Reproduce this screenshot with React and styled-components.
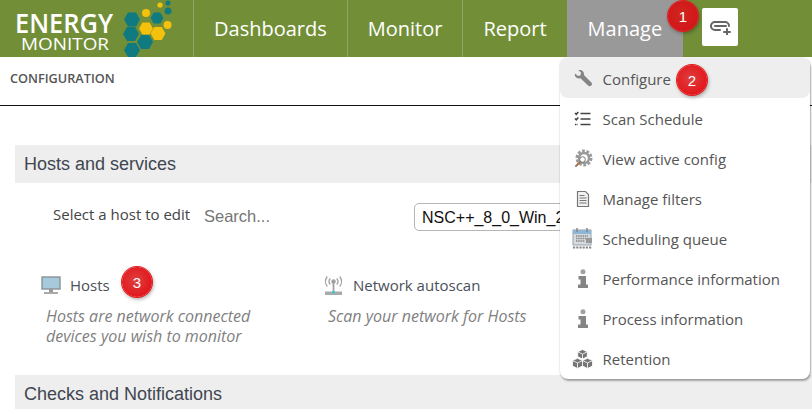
import React from "react";
import styled, { createGlobalStyle } from "styled-components";

const GlobalStyle = createGlobalStyle`
  html, body {
    margin: 0;
    padding: 0;
    background: #fff;
  }
  body {
    font-family: "Open Sans", "Liberation Sans", sans-serif;
    color: #444;
  }
`;

const navItems = [
  { label: "Dashboards" },
  { label: "Monitor" },
  { label: "Report" },
  { label: "Manage", active: true },
];

// flat-top hexagon points around a centre
const hex = (cx, cy, r) =>
  [0, 60, 120, 180, 240, 300]
    .map((a) => {
      const rad = (a * Math.PI) / 180;
      return `${(cx + r * Math.cos(rad)).toFixed(1)},${(cy + r * Math.sin(rad)).toFixed(1)}`;
    })
    .join(" ");

const Logo = () => (
  <LogoSvg viewBox="0 0 193 57" width="193" height="57">
    <text x="15" y="33" fill="#fff" fontFamily="Open Sans" fontWeight="600" fontSize="26.500" textLength="98" lengthAdjust="spacingAndGlyphs">ENERGY</text>
    <text x="21" y="50" fill="#fff" fontFamily="Open Sans" fontSize="16.500" textLength="88" lengthAdjust="spacingAndGlyphs">MONITOR</text>
    <g fill="#0f7a80">
      <polygon points={hex(132, 19.500, 8)} />
      <polygon points={hex(131, 34, 8)} />
      <polygon points={hex(145, 42, 8)} />
      <polygon points={hex(132, 50, 8)} />
      <polygon points={hex(157, 18, 6.500)} />
      <circle cx="168" cy="11" r="3.500" />
      <circle cx="168" cy="3" r="2.500" />
    </g>
    <g fill="#f4c20d">
      <circle cx="146" cy="13" r="4" />
      <circle cx="160" cy="5" r="2.600" />
      <circle cx="167.500" cy="25" r="4" />
      <polygon points={hex(146, 28.500, 7)} />
      <polygon points={hex(158, 33.500, 7.500)} />
    </g>
  </LogoSvg>
);

const LinkPlusIcon = () => (
  <svg width="23" height="15" viewBox="0 0 23 15" fill="none" stroke="#666" strokeWidth="2" strokeLinecap="round">
    <path d="M10 2H6a4 4 0 0 0 0 8h5" />
    <path d="M10 2h6a4 4 0 0 1 4 4" />
    <path d="M6 6h11" />
    <path d="M18 9v5.500M15 12h6" />
  </svg>
);

const WrenchIcon = () => (
  <svg width="20" height="20" viewBox="0 0 20 20" fill="#858585">
    <path d="M2 4.500 5 7l2.500-.8L8 3.500 5.300 1.200C8 .4 10.800 1.600 11 5c0 .8 0 1 .4 1.400l6.800 6.800c1 1 1 2.400.2 3.300-.9 1-2.400 1-3.400 0L8 9.800c-.4-.4-.8-.5-1.500-.4C3.500 9.700 1.200 7.500 2 4.500z" />
  </svg>
);

const ChecklistIcon = () => (
  <svg width="20" height="20" viewBox="0 0 20 20" fill="none" stroke="#444" strokeWidth="1.600">
    <path d="M7.500 4.500h10M7.500 10h10M7.500 15.500h10" />
    <path d="M2 4l1.300 1.300L5.300 3M2 9.500l1.300 1.300 2-2.300" />
    <path d="M2 15.500h3" strokeDasharray="1.500 1" />
  </svg>
);

const GearIcon = () => (
  <svg width="20" height="20" viewBox="0 0 20 20">
    <circle cx="11" cy="9" r="7" fill="none" stroke="#9a9a9a" strokeWidth="3" strokeDasharray="2.800 1.600" />
    <circle cx="11" cy="9" r="5" fill="none" stroke="#999" strokeWidth="2.400" />
    <circle cx="9.500" cy="10.500" r="2.800" fill="#fff" stroke="#777" strokeWidth="1" />
    <path d="M7 13l-4 4" stroke="#a5734f" strokeWidth="2" strokeLinecap="round" />
  </svg>
);

const FileIcon = () => (
  <svg width="20" height="20" viewBox="0 0 20 20" fill="none" stroke="#777" strokeWidth="1.200">
    <path d="M4.500 2.500h8l3 3v12h-11z" fill="#f0f0f0" />
    <path d="M6.500 6.500h5M6.500 9h7M6.500 11.500h7M6.500 14h7" />
  </svg>
);

const CalendarIcon = () => (
  <svg width="21" height="21" viewBox="0 0 21 21">
    <rect x="1" y="2" width="18" height="15" fill="#d6dbe0" stroke="#9aa2a9" />
    <rect x="1" y="2" width="18" height="4" fill="#8db5d6" />
    <path d="M5 0v4M15 0v4" stroke="#888" strokeWidth="1.500" />
    <path d="M4 8h12M4 10.500h12M4 13h9" stroke="#888" strokeWidth="1.400" strokeDasharray="1.500 .7" />
    <rect x="14" y="10" width="6" height="5" fill="#999" />
    <path d="M1 19.500h19" stroke="#888" strokeWidth="2" strokeDasharray="2.200 1" />
  </svg>
);

const InfoIcon = () => (
  <svg width="20" height="20" viewBox="0 0 20 20" fill="#858585">
    <circle cx="10" cy="2.800" r="2.500" fill="#a0a0a0" />
    <path d="M5.500 7h7.500v8.500h2V19h-10v-3.500h2.500V10.500h-2z" />
  </svg>
);

const CubesIcon = () => (
  <svg width="21" height="20" viewBox="0 0 21 20" fill="#757575" stroke="#fff" strokeWidth=".8">
    <path d="M10.500 .5l4.800 2.300v4.900l-4.800 2.300-4.800-2.300V2.800z" />
    <path d="M5.700 2.800l4.800 2.300 4.800-2.300M10.500 5.100v5" fill="none" />
    <path d="M5.500 9.300l5 2.300v5.400l-5 2.500-5-2.500v-5.400z" />
    <path d="M.5 11.600l5 2.300 5-2.300M5.500 13.900v5.600" fill="none" />
    <path d="M15.500 9.300l5 2.300v5.400l-5 2.500-5-2.500v-5.400z" />
    <path d="M10.500 11.600l5 2.300 5-2.300M15.500 13.900v5.600" fill="none" />
  </svg>
);

const MonitorIcon = () => (
  <svg width="20" height="19" viewBox="0 0 20 19">
    <rect x="1" y="1" width="18" height="12" fill="#a6cad9" stroke="#8a9299" strokeWidth="1.400" />
    <rect x="8" y="13" width="4" height="3" fill="#999" />
    <rect x="3" y="16" width="14" height="2" fill="#aaa" />
  </svg>
);

const AntennaIcon = () => (
  <svg width="21" height="21" viewBox="0 0 21 21" fill="none" stroke="#a0a0a0" strokeWidth="1.300">
    <circle cx="10.500" cy="6.500" r="1.600" fill="#999" />
    <path d="M7.300 3.500a4.500 4.500 0 0 0 0 6M13.700 3.500a4.500 4.500 0 0 1 0 6M4.300 1.500a8 8 0 0 0 0 10M16.700 1.500a8 8 0 0 1 0 10" />
    <path d="M10.500 8v9" strokeWidth="1.800" />
    <rect x="2" y="16.500" width="17" height="3.500" fill="#aaa" stroke="none" />
    <rect x="9" y="16" width="3" height="2.500" fill="#4cc" stroke="none" />
  </svg>
);

const menuItems = [
  { label: "Configure", icon: <WrenchIcon />, active: true },
  { label: "Scan Schedule", icon: <ChecklistIcon /> },
  { label: "View active config", icon: <GearIcon /> },
  { label: "Manage filters", icon: <FileIcon /> },
  { label: "Scheduling queue", icon: <CalendarIcon /> },
  { label: "Performance information", icon: <InfoIcon /> },
  { label: "Process information", icon: <InfoIcon /> },
  { label: "Retention", icon: <CubesIcon /> },
];

export default function App() {
  return (
    <Page>
      <GlobalStyle />
      <Header>
        <Logo />
        <Nav>
          {navItems.map((item) => (
            <NavItem key={item.label} $active={item.active}>{item.label}</NavItem>
          ))}
        </Nav>
        <LinkButton>
          <LinkPlusIcon />
        </LinkButton>
        <Badge $x={668} $y={1} $dark>1</Badge>
      </Header>

      <TitleBar>CONFIGURATION</TitleBar>

      <Section>
        <Band>Hosts and services</Band>
        <HostRow>
          <HostLabel>Select a host to edit</HostLabel>
          <SearchInput placeholder="Search..." />
          <HostSelect defaultValue="nsc">
            <option value="nsc">NSC++_8_0_Win_2019</option>
          </HostSelect>
        </HostRow>
        <Cards>
          <Card>
            <CardTitle>
              <MonitorIcon />
              <span>Hosts</span>
            </CardTitle>
            <CardText>Hosts are network connected devices you wish to monitor</CardText>
          </Card>
          <Card>
            <CardTitle>
              <AntennaIcon />
              <span>Network autoscan</span>
            </CardTitle>
            <CardText>Scan your network for Hosts</CardText>
          </Card>
        </Cards>
        <Badge $x={122} $y={267}>3</Badge>
        <Band>Checks and Notifications</Band>
      </Section>

      <Menu>
        {menuItems.map((item) => (
          <MenuRow key={item.label} $active={item.active}>
            <MenuIcon>{item.icon}</MenuIcon>
            {item.label}
          </MenuRow>
        ))}
      </Menu>
      <Badge $x={677} $y={65}>2</Badge>
    </Page>
  );
}

const Page = styled.div`
  position: relative;
  width: 812px;
  height: 409px;
  overflow: hidden;
`;

const Header = styled.header`
  display: flex;
  align-items: stretch;
  height: 57px;
  background: #728f38;
`;

const LogoSvg = styled.svg`
  flex: none;
  display: block;
`;

const Nav = styled.nav`
  display: flex;
`;

const NavItem = styled.div`
  display: flex;
  align-items: center;
  padding: 0 ${(p) => (p.$active ? 21 : 20)}px 0 20px;
  font-size: 20px;
  color: #fff;
  border-left: 1px solid ${(p) => (p.$active ? "transparent" : "#8fa766")};
  background: ${(p) => (p.$active ? "#999999" : "transparent")};
`;

const LinkButton = styled.div`
  display: flex;
  align-items: center;
  justify-content: center;
  width: 36px;
  height: 38px;
  margin: 8px 0 0 19px;
  background: #fff;
  border-radius: 2px;
`;

const Badge = styled.div`
  position: absolute;
  left: ${(p) => p.$x}px;
  top: ${(p) => p.$y}px;
  width: 30px;
  height: 30px;
  display: flex;
  align-items: center;
  justify-content: center;
  border-radius: 50%;
  background: ${(p) =>
    p.$dark
      ? "radial-gradient(circle at 45% 45%, #cc2a1e, #d5141a 70%)"
      : "radial-gradient(circle at 45% 45%, #dd4040, #e3171c 70%)"};
  box-shadow: 0 0 0 1px #e81c1c, 1px 2px 4px rgba(0, 0, 0, 0.4);
  color: #fff;
  font-family: "Liberation Sans", sans-serif;
  font-size: 15px;
`;

const TitleBar = styled.div`
  display: flex;
  align-items: center;
  height: 42px;
  padding: 0 10px 6px;
  font-size: 12.7px;
  font-weight: 600;
  color: #555;
  border-bottom: 1px solid #111;
`;

const Section = styled.section`
  padding: 39px 0 0 15px;
`;

const Band = styled.div`
  display: flex;
  align-items: center;
  height: 38px;
  padding-left: 9px;
  background: #eeeeee;
  font-family: "Liberation Sans", sans-serif;
  font-size: 18px;
  color: #3f4650;
`;

const HostRow = styled.div`
  display: flex;
  align-items: center;
  height: 28px;
  margin-top: 20px;
  padding-left: 38px;
`;

const HostLabel = styled.label`
  width: 151px;
  margin-top: -6px;
  font-size: 15px;
  color: #444;
  white-space: nowrap;
`;

const SearchInput = styled.input`
  width: 210px;
  margin-top: -2px;
  padding: 0;
  border: 0;
  outline: 0;
  font-family: "Liberation Sans", sans-serif;
  font-size: 16.5px;
  &::placeholder {
    color: #757575;
    opacity: 1;
  }
`;

const HostSelect = styled.select`
  width: 300px;
  height: 28px;
  padding-left: 3px;
  background: #fff;
  border: 1px solid #b5b5b5;
  border-radius: 5px;
  font-family: "Liberation Sans", sans-serif;
  font-size: 16px;
  color: #111;
`;

const Cards = styled.div`
  display: grid;
  grid-template-columns: 282px 282px;
  height: 144px;
  padding: 44px 0 0 26px;
  box-sizing: border-box;
`;

const Card = styled.div`
  display: flex;
  flex-direction: column;
`;

const CardTitle = styled.div`
  display: flex;
  align-items: center;
  gap: 9px;
  height: 20px;
  font-size: 15px;
  color: #4a5058;
`;

const CardText = styled.p`
  width: 230px;
  margin: 11px 0 0 5px;
  font-size: 16px;
  line-height: 20px;
  font-style: italic;
  color: #808080;
`;

const Menu = styled.div`
  position: absolute;
  left: 560px;
  top: 58px;
  width: 250px;
  height: 321px;
  background: #fff;
  border-radius: 8px;
  box-shadow: 1px 2px 2px rgba(0, 0, 0, 0.3), 0 0 2px rgba(0, 0, 0, 0.2);
`;

const MenuRow = styled.div`
  display: flex;
  align-items: center;
  gap: 9.500px;
  height: 40px;
  box-sizing: border-box;
  padding: 1px 0 0 12px;
  border-radius: 8px;
  font-size: 15px;
  color: #555;
  background: ${(p) => (p.$active ? "#eeeeee" : "transparent")};
`;

const MenuIcon = styled.span`
  display: flex;
  align-items: center;
  justify-content: center;
  width: 21px;
  height: 21px;
`;
